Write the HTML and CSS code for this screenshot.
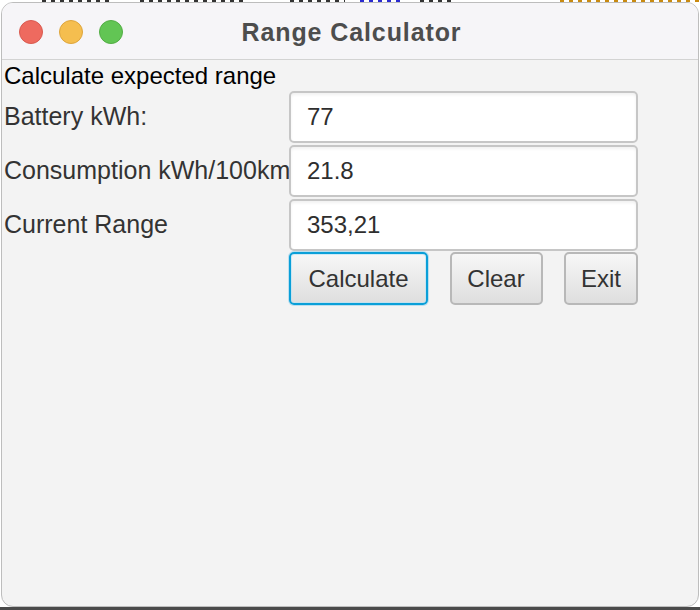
FILE: index.html
```html
<!DOCTYPE html>
<html>
<head>
<meta charset="utf-8">
<link rel="stylesheet" href="styles.css">
</head>
<body>
<div class="desk-top">
  <span class="frag k w1"></span><span class="frag k w2"></span><span class="frag k w3"></span><span class="frag b w4"></span><span class="frag k w5"></span><span class="frag o w6"></span>
</div>
<div class="window">
  <div class="titlebar">
    <div class="lights">
      <span class="light red"></span>
      <span class="light yellow"></span>
      <span class="light green"></span>
    </div>
    <div class="title">Range Calculator</div>
  </div>
  <div class="content">
    <div class="heading">Calculate expected range</div>
    <div class="form">
      <label class="label">Battery kWh:</label>
      <div class="field">77</div>
      <label class="label">Consumption kWh/100km</label>
      <div class="field">21.8</div>
      <label class="label">Current Range</label>
      <div class="field">353,21</div>
      <div></div>
      <div class="buttons">
        <button class="btn focus">Calculate</button>
        <button class="btn">Clear</button>
        <button class="btn">Exit</button>
      </div>
    </div>
  </div>
</div>
<div class="desk-bottom"></div>
</body>
</html>
```
FILE: styles.css
```css
html, body {
  margin: 0;
  padding: 0;
}
body {
  width: 700px;
  height: 610px;
  overflow: hidden;
  background: #ffffff;
  font-family: "Liberation Sans", Arial, sans-serif;
}
.desk-top {
  height: 2px;
  display: flex;
  align-items: flex-start;
}
.frag {
  display: block;
  height: 2px;
}
.k { background: repeating-linear-gradient(90deg, #333 0 4px, transparent 4px 9px); }
.b { background: repeating-linear-gradient(90deg, #2a2ad0 0 4px, transparent 4px 9px); }
.o { background: repeating-linear-gradient(90deg, #c98a10 0 4px, transparent 4px 9px); }
.w1 { margin-left: 42px; width: 68px; }
.w2 { margin-left: 30px; width: 105px; }
.w3 { margin-left: 45px; width: 55px; }
.w4 { margin-left: 15px; width: 45px; }
.w5 { margin-left: 15px; width: 35px; }
.w6 { margin-left: 105px; width: 140px; }
.window {
  margin-left: 1px;
  width: 698px;
  height: 605px;
  border: 1px solid #bdbdbd;
  border-radius: 12px;
  background: #f3f3f3;
  overflow: hidden;
  box-sizing: border-box;
}
.titlebar {
  height: 56px;
  background: #f6f5f8;
  border-bottom: 1px solid #d3d3d3;
  display: flex;
  align-items: center;
}
.lights {
  display: flex;
  gap: 16px;
  padding-left: 17px;
  padding-top: 1px;
}
.light {
  width: 24px;
  height: 24px;
  border-radius: 50%;
  box-sizing: border-box;
}
.red { background: #ee6a5f; border: 1px solid #d95a50; }
.yellow { background: #f5be4f; border: 1px solid #dea53c; }
.green { background: #62c554; border: 1px solid #53ad45; }
.title {
  flex: 1;
  text-align: center;
  font-weight: bold;
  font-size: 25px;
  letter-spacing: 0.9px;
  color: #4d4d4d;
  margin-left: -118px;
  padding-top: 2px;
}
.content {
  padding: 1px 0 0 2px;
}
.heading {
  font-size: 24px;
  line-height: 30px;
  height: 30px;
  color: #000;
}
.form {
  display: grid;
  grid-template-columns: 286px 348px;
  grid-auto-rows: 52px;
  row-gap: 2px;
}
.label {
  display: flex;
  align-items: center;
  font-size: 25px;
  color: #333;
  white-space: nowrap;
  padding-bottom: 2px;
}
.field {
  background: #fff;
  border: 2px solid #c6c6c6;
  border-radius: 5px;
  box-shadow: inset 0 2px 3px rgba(0,0,0,0.06);
  font-size: 24px;
  color: #2e2e2e;
  display: flex;
  align-items: center;
  padding-left: 16px;
  box-sizing: border-box;
  margin-left: -1px;
}
.buttons {
  display: flex;
  justify-content: space-between;
  height: 53px;
  margin-left: -1px;
  margin-top: -1px;
}
.btn {
  font-family: "Liberation Sans", Arial, sans-serif;
  font-size: 24px;
  color: #333;
  border: 2px solid #b8b8b8;
  border-radius: 5px;
  background: linear-gradient(#f7f7f7, #dedede);
  padding: 0;
  height: 53px;
  box-sizing: border-box;
}
.btn:nth-child(1) { width: 139px; }
.btn:nth-child(2) { width: 93px; }
.btn:nth-child(3) { width: 74px; }
.btn.focus {
  border-color: #0a9fd8;
  box-shadow: 0 0 0 1px rgba(120, 200, 235, 0.45), inset 0 0 0 1px rgba(180, 225, 245, 0.6);
}
.desk-bottom {
  height: 3px;
  background: #4a4a4a;
}
```
